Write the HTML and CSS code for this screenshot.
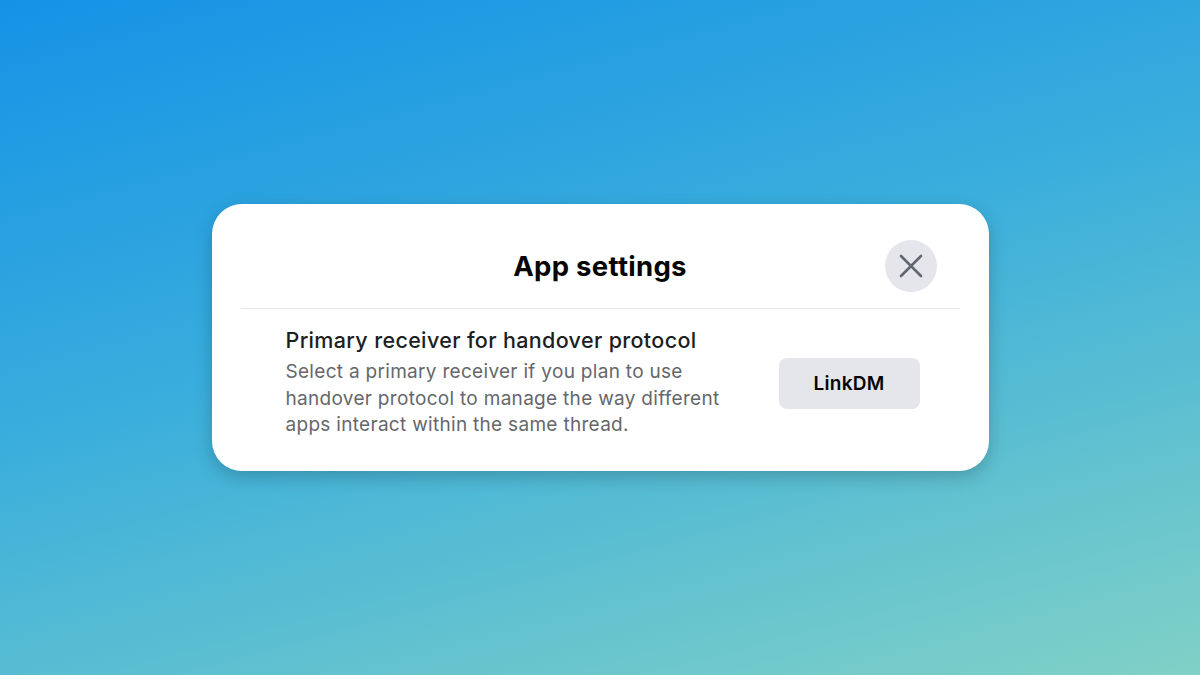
FILE: index.html
```html
<!DOCTYPE html>
<html lang="en">
<head>
<meta charset="UTF-8"><meta name="viewport" content="width=device-width,initial-scale=1">
<title>App settings</title>
<link rel="stylesheet" href="styles.css">
</head>
<body>
<div class="modal">
  <header class="head">
    <span></span>
    <h2>App settings</h2>
    <button class="close" aria-label="Close">
      <svg width="24" height="24" viewBox="0 0 24 24"><path d="M2 2L22 22M22 2L2 22" stroke="#606770" stroke-width="2.6" stroke-linecap="round"/></svg>
    </button>
  </header>
  <section class="row">
    <div class="info">
      <h3>Primary receiver for handover protocol</h3>
      <p>Select a primary receiver if you plan to use handover protocol to manage the way different apps interact within the same thread.</p>
    </div>
    <button class="pick">LinkDM</button>
  </section>
</div>
</body>
</html>
```

FILE: styles.css
```css
html,body{height:100%}
body{margin:0;font-family:Inter,"Liberation Sans",sans-serif;background:linear-gradient(165deg,#1592e6 0%,#3aaedc 45%,#80d1c6 100%);display:flex;align-items:center;justify-content:center}
.modal{width:777px;background:#fff;border-radius:30px;box-shadow:0 6px 18px #0003}
.head{margin:0 29px;padding:36px 23px 16px;border-bottom:1px solid #e4e6eb;display:grid;grid-template-columns:1fr auto 1fr;align-items:center}
.head h2{margin:0;font-size:27.5px;font-weight:700;color:#050505;letter-spacing:.3px}
.close{justify-self:end;width:52px;height:52px;border:none;border-radius:50%;background:#e4e6eb;display:flex;align-items:center;justify-content:center;padding:0;cursor:pointer}
.row{display:flex;align-items:center;justify-content:space-between;padding:18px 69px 32px 74px}
.info h3{margin:0 0 5px;font-size:21.5px;font-weight:500;line-height:27px;color:#1c1e21;letter-spacing:.35px}
.info p{margin:0;width:450px;font-size:19px;line-height:26.5px;color:#65676b;letter-spacing:.3px}
.pick{width:141px;height:51px;border:none;border-radius:8px;background:#e4e6eb;font:600 19px Inter,"Liberation Sans",sans-serif;letter-spacing:.3px;color:#050505;cursor:pointer}
```
